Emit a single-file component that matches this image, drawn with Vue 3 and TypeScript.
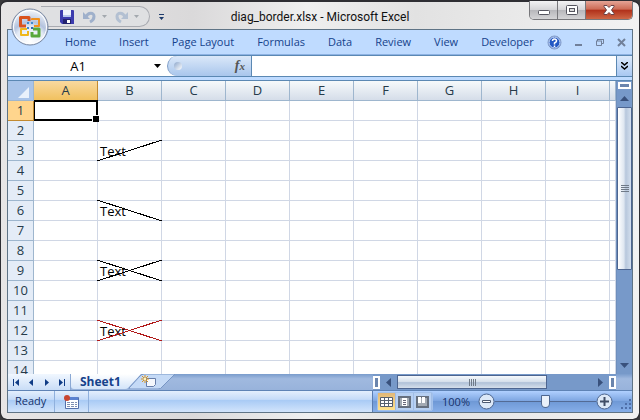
<script setup lang="ts">
const tabs = ['Home', 'Insert', 'Page Layout', 'Formulas', 'Data', 'Review', 'View', 'Developer']
const columns = ['A', 'B', 'C', 'D', 'E', 'F', 'G', 'H', 'I']
type Diagonal = 'up' | 'down' | 'both' | 'both red'
const diagonals: Record<number, Diagonal> = { 3: 'up', 6: 'down', 9: 'both', 12: 'both red' }
const navIcons = [
  { label: 'First sheet', d: 'M2 1h1v7H2zM8 1v7L4 4.5z' },
  { label: 'Previous sheet', d: 'M6 1v7L2 4.5z' },
  { label: 'Next sheet', d: 'M3 1v7l4-3.5z' },
  { label: 'Last sheet', d: 'M1 1v7l4-3.5zM6 1h1v7H6z' },
]
</script>

<template>
  <main class="window">
    <header class="titlebar">
      <div class="left">
        <div class="quick">
          <button class="qbtn save" aria-label="Save">
            <svg width="14" height="14" viewBox="0 0 14 14">
              <path d="M0 1q0-1 1-1h12q1 0 1 1v13H2l-2-2z" fill="#3c3cae" />
              <path d="M3 0h8v7H3z" fill="#eef3fc" /><path d="M3 5h8v2H3z" fill="#b8c8ec" />
              <path d="M3 9h8v5H3z" fill="#23236e" /><path d="M7 10h3v3H7z" fill="#fff" />
            </svg>
          </button>
          <button class="qbtn" aria-label="Undo">
            <svg width="13" height="14" viewBox="0 0 13 14">
              <path d="M3 7C5 2 11 2 11 6.500Q11 10 7 12" fill="none" stroke="#9fb0cb" stroke-width="3" />
              <path d="M0 2v7h7z" fill="#9fb0cb" />
            </svg>
          </button>
          <svg class="drop" width="5" height="3" viewBox="0 0 5 3"><path d="M0 0h5L2.500 3z" fill="#a3a8ae" /></svg>
          <button class="qbtn" aria-label="Redo">
            <svg width="13" height="14" viewBox="0 0 13 14">
              <path d="M10 7C8 2 2 2 2 6.500Q2 10 6 12" fill="none" stroke="#b3c0d2" stroke-width="3" />
              <path d="M13 2v7H6z" fill="#b3c0d2" />
            </svg>
          </button>
          <svg class="drop" width="5" height="3" viewBox="0 0 5 3"><path d="M0 0h5L2.500 3z" fill="#a3a8ae" /></svg>
        </div>
        <button class="qbtn more" aria-label="Customize toolbar">
          <svg width="5" height="6" viewBox="0 0 5 6"><path d="M0 0h5v1H0zM0 3h5L2.500 6z" fill="#1d3a6b" /></svg>
        </button>
      </div>
      <h1>diag_border.xlsx - Microsoft Excel</h1>
      <div class="caption">
        <button aria-label="Minimize">
          <svg width="14" height="12" viewBox="0 0 14 12"><rect x="1.500" y="6.500" width="11" height="4" rx="1" fill="#fff" stroke="#55555f" /></svg>
        </button>
        <button aria-label="Maximize">
          <svg width="14" height="12" viewBox="0 0 14 12">
            <rect x="1.500" y="1.500" width="11" height="9" rx="1" fill="#fff" stroke="#55555f" />
            <rect x="4.500" y="4.500" width="5" height="3" fill="#ddd" stroke="#55555f" />
          </svg>
        </button>
        <button class="close" aria-label="Close">
          <svg width="14" height="12" viewBox="0 0 14 12">
            <path d="M2 1.500h3l2 2 2-2h3v1L9.500 6l2.500 3.500v1H9l-2-2-2 2H2v-1L4.500 6 2 2.500z" fill="#fff" stroke="#694348" />
          </svg>
        </button>
      </div>
      <button class="orb" aria-label="Office">
        <svg width="38" height="38" viewBox="0 0 38 38">
          <defs>
            <radialGradient id="orb" cx=".5" cy=".9" r=".9">
              <stop offset="0" stop-color="#fff" /><stop offset=".45" stop-color="#e3eaf5" />
              <stop offset=".6" stop-color="#b4c3de" /><stop offset="1" stop-color="#f8fafd" />
            </radialGradient>
          </defs>
          <circle cx="19" cy="19" r="18" fill="url(#orb)" stroke="#76859f" />
          <circle cx="19" cy="19" r="16.500" fill="none" stroke="#fff" />
          <g fill="none" stroke-linejoin="round">
            <path d="M15 18H9.500V9.500H18V13" stroke="#d9521d" stroke-width="3" />
            <path d="M21 12v-1h7v7h-5" stroke="#f0901e" stroke-width="2" />
            <path d="M16 21h-6v6h7v-4" stroke="#efb71c" stroke-width="2" />
            <path d="M22 21h6v7h-7v-4" stroke="#58a83b" stroke-width="3" />
          </g>
          <path d="M16 14h2v2h-2zM20 14h2v2h-2zM16 19h2v2h-2z" fill="#3d8bd0" /><path d="M20 19h2v2h-2z" fill="#2f66b4" />
        </svg>
      </button>
    </header>

    <div class="client">
      <nav class="ribbon">
        <div class="tabs"><button v-for="t in tabs" :key="t">{{ t }}</button></div>
        <div class="book">
          <button aria-label="Help">
            <svg width="15" height="15" viewBox="0 0 15 15">
              <circle cx="7.500" cy="7.500" r="6.500" fill="#2459c4" stroke="#8199c4" /><circle cx="7.500" cy="7.500" r="5.500" fill="none" stroke="#dce9fb" />
              <path d="M5.500 6Q5.500 4 7.500 4T9.500 6Q9.500 7 7.500 8v1.500M7.500 10.500v1.500" fill="none" stroke="#fff" stroke-width="1.500" />
            </svg>
          </button>
          <button aria-label="Minimize workbook"><svg width="9" height="9" viewBox="0 0 9 9"><path d="M1 6h7v2H1z" fill="#71809a" /></svg></button>
          <button aria-label="Restore workbook">
            <svg width="10" height="9" viewBox="0 0 10 9"><path d="M2.500 3V1.500h6v4H7M1 3h6M1.500 3v4.500h5V3" fill="none" stroke="#71809a" /><path d="M2 1h7v1H2z" fill="#71809a" /></svg>
          </button>
          <button aria-label="Close workbook"><svg width="9" height="9" viewBox="0 0 9 9"><path d="M1 1l7 7M8 1L1 8" stroke="#71809a" stroke-width="2" /></svg></button>
        </div>
      </nav>

      <div class="formula">
        <label class="namebox">
          <input aria-label="Name box" value="A1" />
          <svg width="7" height="4" viewBox="0 0 7 4"><path d="M0 0h7L3.500 4z" fill="#000" /></svg>
        </label>
        <div class="fx">
          <span class="knob"></span>
          <button aria-label="Insert function"><i>f</i><i class="x">x</i></button>
        </div>
        <input class="entry" aria-label="Formula" />
        <button class="expand" aria-label="Expand formula bar">
          <svg width="7" height="8" viewBox="0 0 7 8"><path d="M0 0l3.500 3L7 0M0 4l3.500 3L7 4" fill="none" stroke="#000" stroke-width="1.500" /></svg>
        </button>
      </div>

      <section class="sheet">
        <div class="viewport">
          <table>
            <colgroup><col class="rowcol" /><col v-for="c in columns" :key="c" class="datacol" /><col /></colgroup>
            <thead>
              <tr>
                <th class="corner"><svg width="11" height="11" viewBox="0 0 11 11"><path d="M11 0v11H0z" fill="#e9f1fb" /></svg></th>
                <th v-for="c in columns" :key="c" scope="col" :class="{ current: c === 'A' }">{{ c }}</th>
                <th></th>
              </tr>
            </thead>
            <tbody>
              <tr v-for="r in 14" :key="r">
                <th scope="row" :class="{ current: r === 1 }">{{ r }}</th>
                <td v-for="c in columns" :key="c" :class="{ selected: r === 1 && c === 'A' }">
                  <div v-if="c === 'B' && diagonals[r]" class="diag">
                    Text
                    <svg :class="diagonals[r]" viewBox="0 0 64 20" preserveAspectRatio="none" shape-rendering="crispEdges">
                      <path v-if="diagonals[r] !== 'down'" d="M0 20L64 0" /><path v-if="diagonals[r] !== 'up'" d="M0 0L64 20" />
                    </svg>
                  </div>
                </td>
                <td></td>
              </tr>
            </tbody>
          </table>
        </div>
        <div class="vscroll">
          <span class="vsplit"></span>
          <button aria-label="Scroll up"><svg width="9" height="5" viewBox="0 0 9 5"><path d="M0 5l4.500-5L9 5z" fill="#39517c" /></svg></button>
          <div class="vthumb"><svg width="8" height="7" viewBox="0 0 8 7"><path d="M0 0h8v1H0zM0 2h8v1H0zM0 4h8v1H0zM0 6h8v1H0z" fill="#6f7a88" /></svg></div>
          <button aria-label="Scroll down"><svg width="9" height="5" viewBox="0 0 9 5"><path d="M0 0l4.500 5L9 0z" fill="#39517c" /></svg></button>
        </div>
      </section>

      <div class="bottom">
        <div class="nav">
          <button v-for="n in navIcons" :key="n.label" :aria-label="n.label"><svg width="9" height="9" viewBox="0 0 9 9"><path :d="n.d" fill="#103c86" /></svg></button>
        </div>
        <div class="sheettabs">
          <svg class="tabshape" width="104" height="15" viewBox="0 0 104 15">
            <defs><linearGradient id="tab" x2="0" y2="1"><stop offset="0" stop-color="#fff" /><stop offset="1" stop-color="#d3e4f9" /></linearGradient></defs>
            <path d="M0 0h70L57 14Q56 15 54 15H3Q0 15 0 12z" fill="url(#tab)" />
            <path d="M58 14L69 2Q71 0 73 0h31L91 13Q90 15 87 15H60Q57 15 58 14z" fill="#c5daf6" stroke="#7795c4" />
            <path d="M75.500 4.500h9v6l-2 2h-7z" fill="#f4f7fc" stroke="#667da9" /><path d="M74 1v8M70 5h8M71 2l6 6M77 2l-6 6" stroke="#d99520" /><path d="M73 4h2v2h-2z" fill="#fff5ba" />
          </svg>
          <button class="sheet1">Sheet1</button>
        </div>
        <div class="hscroll">
          <span class="hsplit"></span>
          <button aria-label="Scroll left"><svg width="5" height="9" viewBox="0 0 5 9"><path d="M5 0v9L0 4.500z" fill="#39517c" /></svg></button>
          <div class="hthumb"><svg width="7" height="7" viewBox="0 0 7 7"><path d="M0 0h1v7H0zM2 0h1v7H2zM4 0h1v7H4zM6 0h1v7H6z" fill="#6f7a88" /></svg></div>
          <button class="right" aria-label="Scroll right"><svg width="5" height="9" viewBox="0 0 5 9"><path d="M0 0v9l5-4.500z" fill="#39517c" /></svg></button>
          <span class="hsplit"></span>
        </div>
      </div>

      <footer class="status">
        <span class="ready">Ready</span>
        <button class="macro" aria-label="Record macro">
          <svg width="15" height="14" viewBox="0 0 15 14">
            <path d="M1.500 2.500h13v11h-13z" fill="#fff" stroke="#5370aa" /><path d="M2 2h12v3H2z" fill="#5c83d0" />
            <path d="M3 7h3v1H3zM7 7h3v1H7zM11 7h2v1h-2zM3 9h3v1H3zM7 9h3v1H7zM11 9h2v1h-2zM3 11h3v1H3zM7 11h3v1H7zM11 11h2v1h-2z" fill="#7e90b3" />
            <circle cx="3" cy="3" r="3" fill="#c8452f" />
          </svg>
        </button>
        <div class="controls">
          <div class="views">
            <button class="on" aria-label="Normal view"><svg width="13" height="10" viewBox="0 0 13 10"><path d="M.5.500h12v9H.5zM4.500 0v10M8.500 0v10M0 3.500h13M0 6.500h13" fill="#fff" stroke="#555f6e" /></svg></button>
            <button aria-label="Page layout view"><svg width="13" height="12" viewBox="0 0 13 12"><path d="M1 1h11v10H1z" fill="#a3aab3" stroke="#66707f" stroke-width="2" /><path d="M4 2h5v8H4z" fill="#fff" /><path d="M5 4.500h3M5 6.500h3M5 8.500h3" stroke="#667" /></svg></button>
            <button aria-label="Page break view"><svg width="13" height="12" viewBox="0 0 13 12"><path d="M1 1h11v10H1z" fill="#a3aab3" stroke="#66707f" stroke-width="2" /><path d="M2 1h3v6H2zM6 1h3v6H6z" fill="#fff" /></svg></button>
          </div>
          <button class="percent">100%</button>
          <button class="zoom" aria-label="Zoom out"><svg width="17" height="17" viewBox="0 0 17 17"><circle cx="8.500" cy="8.500" r="7.500" fill="#dce8f7" stroke="#4d668f" /><path d="M4.500 7.500h8v2h-8z" fill="#fff" stroke="#4c5970" /></svg></button>
          <label class="slider"><input type="range" min="0" max="100" value="50" aria-label="Zoom" /></label>
          <button class="zoom" aria-label="Zoom in"><svg width="17" height="17" viewBox="0 0 17 17"><circle cx="8.500" cy="8.500" r="7.500" fill="#dce8f7" stroke="#4d668f" /><path d="M8.500 4v9M4 8.500h9" stroke="#3f4d66" stroke-width="2" /></svg></button>
          <svg class="grip" width="10" height="10" viewBox="0 0 10 10"><path d="M8 0h2v2H8zM4 4h2v2H4zM8 4h2v2H8zM0 8h2v2H0zM4 8h2v2H4zM8 8h2v2H8z" fill="#4e6fa9" /></svg>
        </div>
      </footer>
    </div>
  </main>
</template>

<style>
html, body { background: #3a3a3c; }
</style>

<style scoped>
* { box-sizing: border-box; }
button { margin: 0; padding: 0; border: 0; background: none; font: inherit; color: inherit; display: flex; align-items: center; justify-content: center; }
input { margin: 0; font: inherit; min-width: 0; }
svg { display: block; flex: none; }
.window { position: relative; height: 100vh; display: flex; flex-direction: column; padding: 2px 6px 6px; border: 1px solid #2e2e33; border-top-width: 2px; border-radius: 7px; background: linear-gradient(90deg, #e7e5e5, #dad9da 30%, #efefef 48%, #e2e2e2 65%, #f2f2f2); background-clip: padding-box; font-family: "Open Sans", sans-serif; font-size: 11px; }
.titlebar { position: relative; flex: none; height: 25px; display: grid; grid-template-columns: 1fr auto 1fr; align-items: center; }
.left { display: flex; align-items: center; }
.quick { height: 21px; margin-left: 34px; padding: 0 10px 0 19px; display: flex; align-items: center; border: 1px solid #a9abb1; border-left: 0; border-radius: 0 11px 11px 0; background: #dfe0e2; }
.qbtn { flex: none; }
.quick .qbtn + .qbtn { margin-left: 9px; }
.drop { margin: 0 8px 0 6px; }
.quick .drop:last-child { margin-right: 0; }
.more { margin-left: 9px; }
h1 { margin: 0; font-family: Roboto, sans-serif; font-size: 12px; line-height: 18px; font-weight: 400; color: #111; white-space: nowrap; }
.caption { display: flex; position: absolute; right: 0; top: -3px; height: 19px; border: 1px solid #77777b; border-top: 0; border-radius: 0 0 5px 5px; overflow: hidden; }
.caption button { width: 28px; border-right: 1px solid #77777b; background: linear-gradient(#f3f3f4, #d5d5d8 48%, #b6b6ba 50%, #d4d4d6); }
.caption .close { width: 46px; border-right: 0; background: linear-gradient(#e5a496, #cc6b55 46%, #b0301a 50%, #ce6746); }
.orb { position: absolute; left: 4px; top: 4px; z-index: 2; }
.client { flex: 1; min-height: 0; display: flex; flex-direction: column; border: 1px solid #5f7486; background: #bfdbff; }
.ribbon { flex: none; height: 25px; display: flex; justify-content: space-between; align-items: center; color: #15428b; border-bottom: 1px solid #8db2e3; }
.tabs { display: flex; gap: 23px; padding-left: 57px; }
.tabs button { white-space: nowrap; line-height: 20px; }
.book { display: flex; align-items: center; gap: 12px; padding-right: 6px; }
.formula { flex: none; height: 22px; display: flex; border-top: 1px solid #5b88b3; border-bottom: 1px solid #5b88b3; background: #fff; }
.namebox { width: 159px; display: flex; align-items: center; padding-right: 6px; }
.namebox input { flex: 1; border: 0; padding: 0 6px 0 0; text-align: center; background: none; font-size: 13px; }
.fx { width: 85px; display: flex; align-items: center; justify-content: space-between; padding: 0 6px; border-radius: 11px 0 0 11px; border-left: 1px solid #7d9cc6; border-right: 1px solid #5b88b3; background: linear-gradient(#dbe8f9, #a9c6ec); }
.knob { width: 8px; height: 8px; border-radius: 50%; background: linear-gradient(135deg, #8ca6cb, #fff); }
.fx i { font-family: "Liberation Serif", serif; font-size: 14px; line-height: 18px; font-weight: 700; color: #555; }
.fx .x { font-size: 11px; }
.entry { flex: 1; border: 0; padding: 0 4px; }
.expand { width: 16px; border-left: 1px solid #5b88b3; background: linear-gradient(#dceafc, #a9c8f2); }
.sheet { flex: 1; min-height: 0; display: flex; margin-top: 3px; border-top: 1px solid #5b88b3; }
.viewport { flex: 1; min-width: 0; overflow: hidden; background: #fff; }
table { width: 100%; table-layout: fixed; border-collapse: separate; border-spacing: 0; }
.rowcol { width: 26px; }
.datacol { width: 64px; }
th, td { height: 20px; padding: 0; border-right: 1px solid #d0d7e5; border-bottom: 1px solid #d0d7e5; line-height: 19px; }
th { font-size: 13px; font-weight: 400; color: #263b4a; border-color: #9eb6ce; text-align: center; }
thead th { background: linear-gradient(#f6fafb, #d5dde9); }
tbody th { background: #e4ecf7; }
thead .current { background: linear-gradient(#f9d99f, #f1c15f); border-color: #c28a30; }
tbody .current { background: #ffd58d; border-color: #c28a30; }
.corner, thead .corner { background: #a9c4e9; }
.corner svg { margin: 3px 0 0 10px; }
td { position: relative; }
.selected::before { content: ""; position: absolute; inset: -1px -1px -1px 0; border: 2px solid #000; border-left-width: 1px; z-index: 1; }
.selected::after { content: ""; position: absolute; right: -2px; bottom: -2px; width: 6px; height: 6px; background: #000; border: 1px solid #fff; border-right: 0; border-bottom: 0; z-index: 2; }
.diag { position: relative; padding-left: 2px; height: 19px; font-size: 13px; line-height: 20px; color: #000; }
.diag svg { position: absolute; left: -1px; top: -1px; width: 65px; height: 21px; fill: none; stroke: #000; overflow: visible; }
.diag .red { stroke: #b01818; }
.vscroll { width: 16px; flex: none; display: flex; flex-direction: column; border-left: 1px solid #6f8fbc; background: #7799c9; }
.vsplit { height: 7px; margin: 1px; border: 2px solid #fff; background: #6b85ad; }
.vscroll button { flex: none; height: 17px; }
.vthumb { height: 163px; display: flex; align-items: center; justify-content: center; border: 1px solid #4d6590; border-radius: 1px; background: linear-gradient(90deg, #fff, #dfe7f1 45%, #b7c7dc 60%, #d3dfee); }
.vscroll button:last-child { margin-top: auto; }
.bottom { flex: none; height: 17px; display: flex; background: linear-gradient(#7a9ccc, #a0b9df 30%, #98b3db); border-bottom: 1px solid #5f83b5; }
.nav { width: 63px; display: flex; justify-content: space-around; background: linear-gradient(#f1f7ff, #c9ddf7); border-right: 1px solid #8aa8d4; }
.sheettabs { position: relative; flex: 1; padding-left: 9px; }
.tabshape { position: absolute; left: 0; top: 0; }
.sheet1 { position: relative; font-weight: 700; font-size: 12px; line-height: 16px; color: #15428b; }
.hscroll { width: 243px; flex: none; display: flex; align-items: center; background: #7799c9; margin-right: 16px; }
.hsplit { width: 7px; height: 13px; border: 2px solid #fff; background: #6b85ad; }
.status { flex: none; height: 21px; display: flex; align-items: stretch; color: #15326b; background: linear-gradient(#e4effd, #c5dbf8 40%, #a9cbf5 45%, #d2e4fb); }
.ready { width: 47px; padding-left: 7px; line-height: 20px; border-right: 1px solid #8fb0dd; }
.macro { width: 34px; border-right: 1px solid #8fb0dd; }
.hthumb { width: 150px; height: 14px; display: flex; align-items: center; justify-content: center; border: 1px solid #4d6590; background: linear-gradient(#f7fafd, #d4deea 50%, #b0c1d8 55%, #d5dfeb); }
.hscroll button { width: 17px; }
.hscroll .right { margin-left: auto; }
.controls { margin-left: auto; flex: none; width: 260px; display: flex; align-items: center; padding: 0 1px 0 4px; border-left: 1px solid #5b7db1; background: linear-gradient(#b0d0ff, #7fa7e2 45%, #6f99d6 50%, #86aee8); }
.views { display: flex; height: 19px; border: 1px solid #a3c1ea; border-radius: 2px; background: #b7d0f2; }
.views button { width: 18px; border-right: 1px solid #9fbce6; }
.views .on { background: linear-gradient(#e1b878, #ffe28c); }
.percent { margin-left: 9px; margin-right: 8px; width: 28px; }
.slider { flex: 1; display: flex; }
.slider input { width: 100%; height: 16px; appearance: none; background: linear-gradient(#536b95, #536b95) center / 100% 1px no-repeat; }
.slider input::-webkit-slider-thumb { appearance: none; width: 9px; height: 13px; background: #eaf1fa; border: 1px solid #4d668f; border-radius: 1px 1px 5px 5px; }
.grip { align-self: flex-end; margin: 0 0 3px 8px; }
</style>
